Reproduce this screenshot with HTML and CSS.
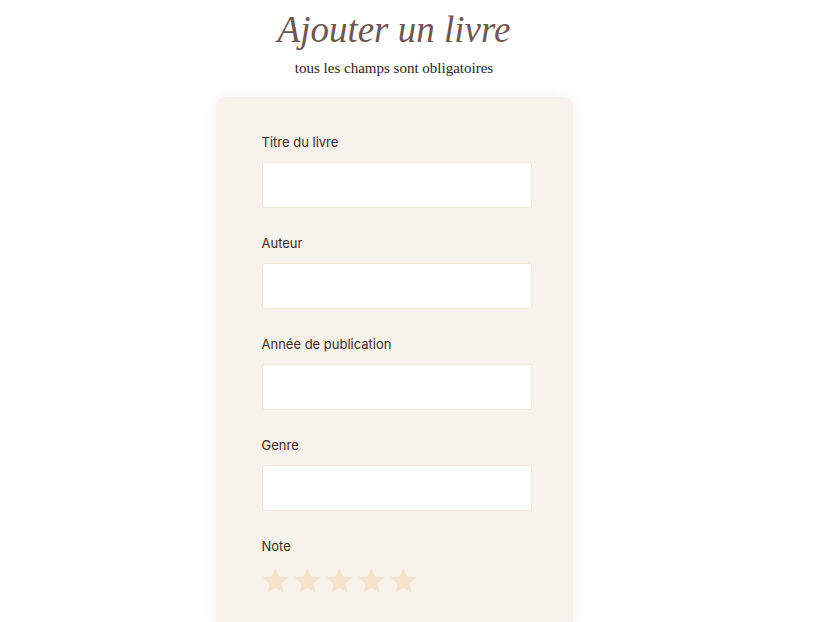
FILE: index.html
```html
<!DOCTYPE html>
<html lang="fr">
<head>
<meta charset="utf-8">
<title>Ajouter un livre</title>
<link rel="stylesheet" href="styles.css">
</head>
<body>
<main class="page">
  <h1 class="title">Ajouter un livre</h1>
  <p class="subtitle">tous les champs sont obligatoires</p>
  <form class="card">
    <div class="field">
      <label class="label" for="titre">Titre du livre</label>
      <input class="input" id="titre" type="text">
    </div>
    <div class="field">
      <label class="label" for="auteur">Auteur</label>
      <input class="input" id="auteur" type="text">
    </div>
    <div class="field">
      <label class="label" for="annee">Année de publication</label>
      <input class="input" id="annee" type="text">
    </div>
    <div class="field">
      <label class="label" for="genre">Genre</label>
      <input class="input" id="genre" type="text">
    </div>
    <div class="field">
      <span class="label">Note</span>
      <div class="stars">
        <svg class="star" viewBox="0 0 24 24"><path d="M12 1.5l3.1 7.1 7.7.7-5.8 5.1 1.7 7.6L12 18l-6.7 4 1.7-7.6-5.8-5.1 7.7-.7z"/></svg>
        <svg class="star" viewBox="0 0 24 24"><path d="M12 1.5l3.1 7.1 7.7.7-5.8 5.1 1.7 7.6L12 18l-6.7 4 1.7-7.6-5.8-5.1 7.7-.7z"/></svg>
        <svg class="star" viewBox="0 0 24 24"><path d="M12 1.5l3.1 7.1 7.7.7-5.8 5.1 1.7 7.6L12 18l-6.7 4 1.7-7.6-5.8-5.1 7.7-.7z"/></svg>
        <svg class="star" viewBox="0 0 24 24"><path d="M12 1.5l3.1 7.1 7.7.7-5.8 5.1 1.7 7.6L12 18l-6.7 4 1.7-7.6-5.8-5.1 7.7-.7z"/></svg>
        <svg class="star" viewBox="0 0 24 24"><path d="M12 1.5l3.1 7.1 7.7.7-5.8 5.1 1.7 7.6L12 18l-6.7 4 1.7-7.6-5.8-5.1 7.7-.7z"/></svg>
      </div>
    </div>
  </form>
</main>
</body>
</html>
```
FILE: styles.css
```css
html, body {
  margin: 0;
  padding: 0;
  background: #ffffff;
}
body {
  overflow: hidden;
}
.page {
  width: 788px;
  display: flex;
  flex-direction: column;
  align-items: center;
}
.title {
  margin: 9px 0 0;
  font-family: "Liberation Serif", "DejaVu Serif", serif;
  font-style: italic;
  font-weight: 400;
  font-size: 37px;
  line-height: 42px;
  color: #6d5750;
}
.subtitle {
  margin: 8px 0 0;
  font-family: "Liberation Serif", "DejaVu Serif", serif;
  font-size: 15px;
  line-height: 18px;
  color: #2e2220;
}
.card {
  margin-top: 20px;
  width: 357px;
  box-sizing: border-box;
  padding: 37px 41px 40px 46px;
  background: #f7f2ec;
  border-radius: 9px;
  box-shadow: 0 0 14px rgba(120, 90, 60, 0.08);
  display: flex;
  flex-direction: column;
  gap: 27px;
}
.field {
  display: flex;
  flex-direction: column;
  gap: 12px;
}
.label {
  font-family: "Inter", "Noto Sans", sans-serif;
  font-size: 13px;
  line-height: 16px;
  color: #3a2b27;
}
.input {
  width: 270px;
  height: 46px;
  box-sizing: border-box;
  margin: 0;
  border: 1px solid #f2e6d6;
  border-radius: 3px;
  background: #ffffff;
}
.stars {
  display: flex;
  gap: 3px;
  margin-left: -1px;
}
.star {
  width: 29px;
  height: 29px;
  fill: #f3e4cb;
}
```
